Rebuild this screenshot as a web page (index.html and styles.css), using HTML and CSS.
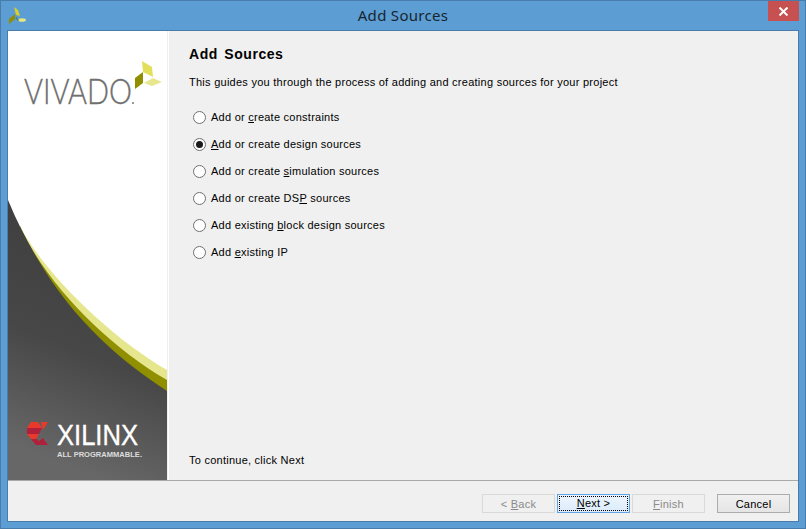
FILE: index.html
```html
<!DOCTYPE html>
<html lang="en">
<head>
<meta charset="utf-8">
<title>Add Sources</title>
<link rel="stylesheet" href="styles.css">
</head>
<body>
<div class="window">
  <header class="titlebar">
    <svg class="app-icon" width="18" height="18" viewBox="0 0 18 18">
      <polygon points="6,0 10,3 12,9 8,8" fill="#d8d028"/>
      <polygon points="1,12 7,7 7,12 1,17" fill="#8f8f00"/>
      <ellipse cx="14" cy="13" rx="4" ry="1.800" fill="#e8e680"/>
      <path d="M8 10 C9 13 10 13 11 13" stroke="#4a6a30" fill="none"/>
    </svg>
    <h1 class="title">Add Sources</h1>
    <div class="close"><svg width="11" height="9" viewBox="0 0 11 9"><path d="M1.500 .5l8 8M9.500 .5l-8 8" stroke="#fff" stroke-width="2"/></svg></div>
  </header>
  <div class="client">
    <div class="body">
      <aside class="side">
        <svg class="art" width="159" height="449" viewBox="8 31 159 449">
          <defs>
            <linearGradient id="g" x1="0.8" y1="0.1" x2="0.6" y2="1">
              <stop offset="0" stop-color="#3e3e3e"/>
              <stop offset="0.55" stop-color="#474747"/>
              <stop offset="1" stop-color="#676767"/>
            </linearGradient>
          </defs>
          <path d="M20 226 C42 270 108 336 167 370 V391 H20Z" fill="#e6e68f"/>
          <path d="M20 226 C46 284 108 346 167 380 V391 H20Z" fill="#8f8f00"/>
          <path d="M8 200 C53 308 117 358 167 391 V480 H8Z" fill="url(#g)"/>
          <text class="vivado" x="24" y="104" textLength="108" lengthAdjust="spacingAndGlyphs">VIVADO</text>
          <circle cx="133" cy="103" r="1" fill="#777"/>
          <polygon points="142,61 152,67 153,77 143,72" fill="#e2e05a"/>
          <polygon points="135,78 143,72 143,83 135,89" fill="#8f8f00"/>
          <polygon points="144,83 153,78 162,82 152,86" fill="#e8e68f"/>
          <polygon points="31,422 38,422 42,428 27,428" fill="#e8392a"/>
          <polygon points="27,428 42,428 39,434 27,434" fill="#b0203a"/>
          <polygon points="27,434 39,434 36,439 31,439" fill="#e8392a"/>
          <polygon points="31,439 37,439 42,445 36,445" fill="#b0203a"/>
          <polygon points="41,422 48,422 43,430" fill="#e8392a"/>
          <polygon points="43,438 48,445 41,445 39,441" fill="#b0203a"/>
          <text class="xilinx" x="57" y="445" textLength="81" lengthAdjust="spacingAndGlyphs">XILINX</text>
          <text class="tagline" x="57" y="457" textLength="85" lengthAdjust="spacingAndGlyphs">ALL PROGRAMMABLE.</text>
        </svg>
      </aside>
      <main class="main">
        <h2 class="heading">Add Sources</h2>
        <p class="desc">This guides you through the process of adding and creating sources for your project</p>
        <ul class="options">
          <li class="option"><span class="radio"></span>Add or <u>c</u>reate constraints</li>
          <li class="option"><span class="radio on"></span><u>A</u>dd or create design sources</li>
          <li class="option"><span class="radio"></span>Add or create <u>s</u>imulation sources</li>
          <li class="option"><span class="radio"></span>Add or create DS<u>P</u> sources</li>
          <li class="option"><span class="radio"></span>Add existing <u>b</u>lock design sources</li>
          <li class="option"><span class="radio"></span>Add <u>e</u>xisting IP</li>
        </ul>
        <p class="hint">To continue, click Next</p>
      </main>
    </div>
    <footer class="footer">
      <button class="btn off">&lt; <u>B</u>ack</button>
      <button class="btn next"><span class="focus"><u>N</u>ext &gt;</span></button>
      <button class="btn off"><u>F</u>inish</button>
      <button class="btn cancel">Cancel</button>
    </footer>
  </div>
</div>
</body>
</html>
```
FILE: styles.css
```css
* { box-sizing: border-box; }
html, body { margin: 0; padding: 0; }
body { width: 806px; height: 529px; overflow: hidden; font-family: "Liberation Sans", Arial, sans-serif; font-size: 11px; color: #000; }
.window { width: 806px; height: 529px; background: #5c9dd3; border: 1px solid #4a7cab; display: flex; flex-direction: column; }
.titlebar { height: 29px; flex: none; display: flex; align-items: flex-start; position: relative; }
.app-icon { margin: 6px 0 0 7px; }
.title { position: absolute; left: 0; right: 0; top: 6px; margin: 0; text-align: center; font-size: 15px; line-height: 17px; font-weight: normal; color: #18252f; letter-spacing: .3px; font-family: "Noto Sans", sans-serif; }
.close { position: absolute; right: 6px; top: 0; width: 31px; height: 20px; background: #c75050; display: flex; align-items: center; justify-content: center; }
.client { flex: 1; margin: 0 6px 6px; background: #f0f0f0; border: 1px solid #4a7cab; display: flex; flex-direction: column; min-height: 0; }
.body { flex: 1; display: flex; min-height: 0; border-bottom: 1px solid #a9a9a9; }
.side { width: 159px; flex: none; background: #fff; }
.art { display: block; }
.vivado { font: 300 36px "Lato", "Liberation Sans", sans-serif; fill: #6f6f6f; stroke: #6f6f6f; stroke-width: .4px; }
.xilinx { font: 30px "Liberation Sans", sans-serif; fill: #fff; stroke: #fff; stroke-width: .4px; }
.tagline { font: bold 7px "Liberation Sans", sans-serif; fill: #ddd; }
.main { flex: 1; display: flex; flex-direction: column; margin-left: 1px; border-left: 1px solid #fff; padding: 15px 0 13px 20px; }
.heading { margin: 0; font-size: 14px; line-height: 17px; font-weight: bold; letter-spacing: .55px; word-spacing: 2px; }
.desc { margin: 12px 0 0; line-height: 14px; letter-spacing: .26px; }
.options { list-style: none; margin: 21px 0 0; padding: 0; display: flex; flex-direction: column; gap: 13px; }
.option { display: flex; align-items: center; height: 14px; margin-left: 4px; white-space: pre; letter-spacing: .25px; }
.radio { width: 13px; height: 13px; border-radius: 50%; border: 1px solid #707070; background: #fff; margin-right: 5px; flex: none; display: flex; align-items: center; justify-content: center; }
.radio.on::after { content: ""; width: 7px; height: 7px; border-radius: 50%; background: #1a1a1a; }
.hint { margin: auto 0 0; line-height: 14px; letter-spacing: .25px; }
.footer { height: 40px; flex: none; display: flex; align-items: flex-start; padding: 13px 8px 0 0; justify-content: flex-end; }
.btn { height: 19px; width: 73px; padding: 0; font: 11px "Liberation Sans", sans-serif; letter-spacing: .25px; background: #f0f0f0; border: 1px solid #acacac; color: #000; margin-left: 2px; }
.btn.off { color: #8a8a8a; border-color: #d9d9d9; }
.btn.cancel { margin-left: 12px; background: linear-gradient(#f0f0f0, #e5e5e5); }
.btn.next { border-color: #5fa2e6; background: linear-gradient(#ecf4fc, #dcecfc); padding: 1px; }
.focus { display: block; height: 100%; line-height: 13px; border: 1px dotted #000; }
```
